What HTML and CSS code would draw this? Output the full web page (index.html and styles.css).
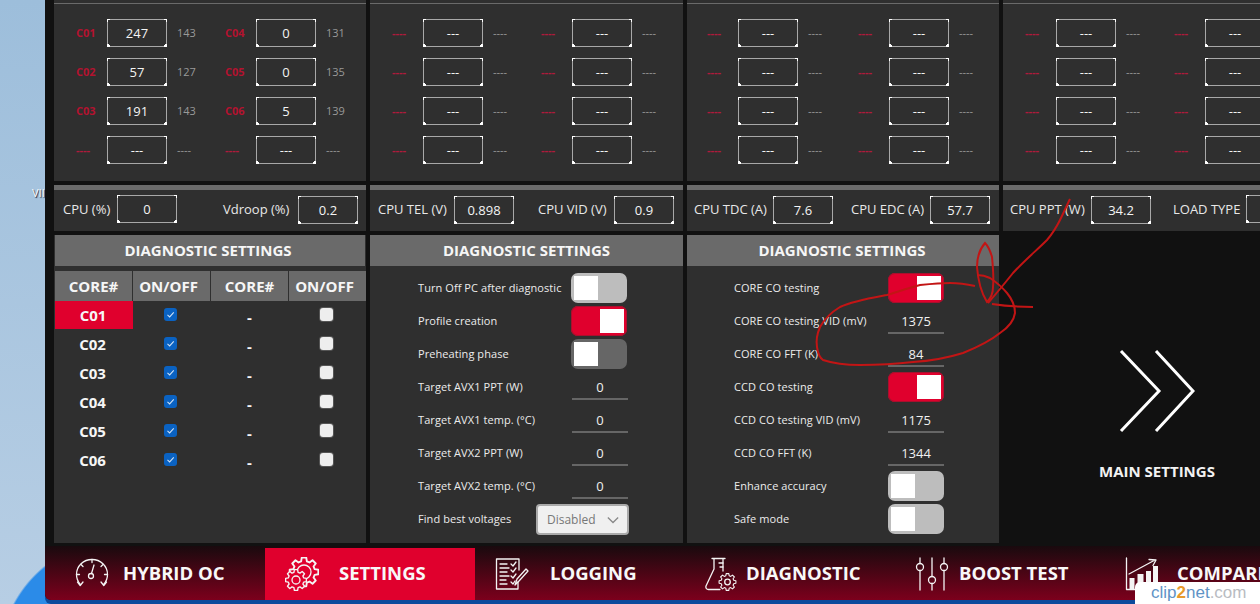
FILE: index.html
```html
<!DOCTYPE html>
<html lang="en">
<head>
<meta charset="utf-8">
<title>Hybrid OC settings</title>
<link rel="stylesheet" href="styles.css">
</head>
<body>
<div class="desktop-label">VII</div>
<div class="window">
  <main class="content">
    <section class="panel monitor">
      <div class="rule"></div>
      <div class="cores">
        <span class="cname">C01</span><span class="box">247</span><span class="cnum">143</span><span class="cname">C04</span><span class="box">0</span><span class="cnum">131</span>
        <span class="cname">C02</span><span class="box">57</span><span class="cnum">127</span><span class="cname">C05</span><span class="box">0</span><span class="cnum">135</span>
        <span class="cname">C03</span><span class="box">191</span><span class="cnum">143</span><span class="cname">C06</span><span class="box">5</span><span class="cnum">139</span>
        <span class="cname nil">----</span><span class="box">---</span><span class="cnum">----</span><span class="cname nil">----</span><span class="box">---</span><span class="cnum">----</span>
      </div>
    </section>
    <section class="panel monitor">
      <div class="rule"></div>
      <div class="cores">
        <span class="cname nil">----</span><span class="box">---</span><span class="cnum">----</span><span class="cname nil">----</span><span class="box">---</span><span class="cnum">----</span>
        <span class="cname nil">----</span><span class="box">---</span><span class="cnum">----</span><span class="cname nil">----</span><span class="box">---</span><span class="cnum">----</span>
        <span class="cname nil">----</span><span class="box">---</span><span class="cnum">----</span><span class="cname nil">----</span><span class="box">---</span><span class="cnum">----</span>
        <span class="cname nil">----</span><span class="box">---</span><span class="cnum">----</span><span class="cname nil">----</span><span class="box">---</span><span class="cnum">----</span>
      </div>
    </section>
    <section class="panel monitor">
      <div class="rule"></div>
      <div class="cores cores-c">
        <span class="cname nil">----</span><span class="box">---</span><span class="cnum">----</span><span class="cname nil">----</span><span class="box">---</span><span class="cnum">----</span>
        <span class="cname nil">----</span><span class="box">---</span><span class="cnum">----</span><span class="cname nil">----</span><span class="box">---</span><span class="cnum">----</span>
        <span class="cname nil">----</span><span class="box">---</span><span class="cnum">----</span><span class="cname nil">----</span><span class="box">---</span><span class="cnum">----</span>
        <span class="cname nil">----</span><span class="box">---</span><span class="cnum">----</span><span class="cname nil">----</span><span class="box">---</span><span class="cnum">----</span>
      </div>
    </section>
    <section class="panel monitor">
      <div class="rule"></div>
      <div class="cores">
        <span class="cname nil">----</span><span class="box">---</span><span class="cnum">----</span><span class="cname nil">----</span><span class="box">---</span><span></span>
        <span class="cname nil">----</span><span class="box">---</span><span class="cnum">----</span><span class="cname nil">----</span><span class="box">---</span><span></span>
        <span class="cname nil">----</span><span class="box">---</span><span class="cnum">----</span><span class="cname nil">----</span><span class="box">---</span><span></span>
        <span class="cname nil">----</span><span class="box">---</span><span class="cnum">----</span><span class="cname nil">----</span><span class="box">---</span><span></span>
      </div>
    </section>

    <section class="panel stats stats-a"><span class="slabel up">CPU (%)</span><span class="box up">0</span><i></i><span class="slabel">Vdroop (%)</span><span class="box">0.2</span></section>
    <section class="panel stats stats-b"><span class="slabel">CPU TEL (V)</span><span class="box">0.898</span><i></i><span class="slabel">CPU VID (V)</span><span class="box">0.9</span></section>
    <section class="panel stats stats-c"><span class="slabel">CPU TDC (A)</span><span class="box">7.6</span><i></i><span class="slabel">CPU EDC (A)</span><span class="box">57.7</span></section>
    <section class="panel stats stats-d"><span class="slabel">CPU PPT (W)</span><span class="box">34.2</span><i></i><span class="slabel">LOAD TYPE</span><span class="box up"></span></section>

    <section class="panel diag">
      <h2>DIAGNOSTIC SETTINGS</h2>
      <div class="core-table">
        <span class="th">CORE#</span><span class="th">ON/OFF</span><span class="th">CORE#</span><span class="th">ON/OFF</span>
        <span class="td active">C01</span><span class="td"><b class="check on"><svg viewBox="0 0 12 12"><path d="M3.2 6.4 5.2 8.2 9 4"/></svg></b></span><span class="td dash">-</span><span class="td"><b class="check"></b></span>
        <span class="td">C02</span><span class="td"><b class="check on"><svg viewBox="0 0 12 12"><path d="M3.2 6.4 5.2 8.2 9 4"/></svg></b></span><span class="td dash">-</span><span class="td"><b class="check"></b></span>
        <span class="td">C03</span><span class="td"><b class="check on"><svg viewBox="0 0 12 12"><path d="M3.2 6.4 5.2 8.2 9 4"/></svg></b></span><span class="td dash">-</span><span class="td"><b class="check"></b></span>
        <span class="td">C04</span><span class="td"><b class="check on"><svg viewBox="0 0 12 12"><path d="M3.2 6.4 5.2 8.2 9 4"/></svg></b></span><span class="td dash">-</span><span class="td"><b class="check"></b></span>
        <span class="td">C05</span><span class="td"><b class="check on"><svg viewBox="0 0 12 12"><path d="M3.2 6.4 5.2 8.2 9 4"/></svg></b></span><span class="td dash">-</span><span class="td"><b class="check"></b></span>
        <span class="td">C06</span><span class="td"><b class="check on"><svg viewBox="0 0 12 12"><path d="M3.2 6.4 5.2 8.2 9 4"/></svg></b></span><span class="td dash">-</span><span class="td"><b class="check"></b></span>
      </div>
    </section>

    <section class="panel form">
      <h2>DIAGNOSTIC SETTINGS</h2>
      <div class="rows">
        <div class="row"><span>Turn Off PC after diagnostic</span><b class="toggle off"></b></div>
        <div class="row"><span>Profile creation</span><b class="toggle on"></b></div>
        <div class="row"><span>Preheating phase</span><b class="toggle off dim"></b></div>
        <div class="row"><span>Target AVX1 PPT (W)</span><b class="value">0</b></div>
        <div class="row"><span>Target AVX1 temp. (°C)</span><b class="value">0</b></div>
        <div class="row"><span>Target AVX2 PPT (W)</span><b class="value">0</b></div>
        <div class="row"><span>Target AVX2 temp. (°C)</span><b class="value">0</b></div>
        <div class="row"><span>Find best voltages</span><b class="select">Disabled<svg viewBox="0 0 14 8"><path d="M1 1 7 7 13 1"/></svg></b></div>
      </div>
    </section>

    <section class="panel form form-c">
      <h2>DIAGNOSTIC SETTINGS</h2>
      <div class="rows">
        <div class="row"><span>CORE CO testing</span><b class="toggle on"></b></div>
        <div class="row"><span>CORE CO testing VID (mV)</span><b class="value">1375</b></div>
        <div class="row"><span>CORE CO FFT (K)</span><b class="value">84</b></div>
        <div class="row"><span>CCD CO testing</span><b class="toggle on"></b></div>
        <div class="row"><span>CCD CO testing VID (mV)</span><b class="value">1175</b></div>
        <div class="row"><span>CCD CO FFT (K)</span><b class="value">1344</b></div>
        <div class="row"><span>Enhance accuracy</span><b class="toggle off"></b></div>
        <div class="row"><span>Safe mode</span><b class="toggle off"></b></div>
      </div>
    </section>

    <section class="main-link">
      <svg class="chevrons" viewBox="0 0 76 84"><path d="M2 2 40 42 2 82M37 2 74 42 37 82"/></svg>
      <strong>MAIN SETTINGS</strong>
    </section>
  </main>

  <svg class="defs" width="0" height="0"><defs><path id="gear" d="M9.88 -1.56 L9.88 1.56 L7.34 1.97 L6.58 3.8 L8.09 5.88 L5.88 8.09 L3.8 6.58 L1.97 7.34 L1.56 9.88 L-1.56 9.88 L-1.97 7.34 L-3.8 6.58 L-5.88 8.09 L-8.09 5.88 L-6.58 3.8 L-7.34 1.97 L-9.88 1.56 L-9.88 -1.56 L-7.34 -1.97 L-6.58 -3.8 L-8.09 -5.88 L-5.88 -8.09 L-3.8 -6.58 L-1.97 -7.34 L-1.56 -9.88 L1.56 -9.88 L1.97 -7.34 L3.8 -6.58 L5.88 -8.09 L8.09 -5.88 L6.58 -3.8 L7.34 -1.97 Z"/></defs></svg>

  <nav class="tabs">
    <a class="tab tab-hybrid">
      <svg class="ico" viewBox="0 0 34 34"><path d="M5 27C2.500 24 1.500 21 1.500 17.500 1.500 9 8.500 2.500 17 2.500S32.500 9 32.500 17.500C32.500 21 31.500 24 29 27"/><path d="M2.500 25 5.200 28.500 8 25M26 25 28.800 28.500 31.500 25M17 2.500V5.500M6 7.500 8 9.500M28 7.500 26 9.500M1.500 17.500H4.500M29.500 17.500H32.500M16.500 16.500 19 8"/><circle cx="16" cy="19" r="2.500"/></svg>
      <span>HYBRID OC</span>
    </a>
    <a class="tab tab-settings current">
      <svg class="ico" viewBox="0 0 34 34"><use href="#gear" transform="translate(19 15) scale(1.45)"/><circle cx="19" cy="15" r="7"/><use class="masked" href="#gear" transform="translate(11 23) scale(1.05)"/><circle cx="11" cy="23" r="4"/></svg>
      <span>SETTINGS</span>
    </a>
    <a class="tab tab-logging">
      <svg class="ico" viewBox="0 0 34 34"><path d="M23 25V32H1.500V2H24V13"/><path d="M5 7H12M5 11H14M5 15H12M5 19H14M5 23H11M5 27H12"/><path d="M16 7 18 9 21 5M16 13 18 15 21 11M16 19 18 21 21 17M16 25 18 27 20 24"/><path d="M20 28 22 22 31 12 33 14 24 24Z"/></svg>
      <span>LOGGING</span>
    </a>
    <a class="tab tab-flask">
      <svg class="ico" viewBox="0 0 32 34"><path d="M7 1.500H20M9 1.500V12L1 29C.5 31 1.500 32.500 3.500 32.500H15M18 1.500V14"/><path d="M14 6H18M15 10H18"/><use href="#gear" transform="translate(22.500 25) scale(.85)"/><circle cx="22.500" cy="25" r="2.800"/></svg>
      <span>DIAGNOSTIC</span>
    </a>
    <a class="tab tab-boost">
      <svg class="ico" viewBox="0 0 34 34"><circle cx="5" cy="10" r="3.500"/><circle cx="17" cy="23" r="3.500"/><circle cx="29" cy="10" r="3.500"/><path d="M5 1V6.500M5 13.500V33M17 1V19.500M17 26.500V33M29 1V6.500M29 13.500V33"/></svg>
      <span>BOOST TEST</span>
    </a>
    <a class="tab tab-compare">
      <svg class="ico" viewBox="0 0 34 34"><path d="M1.500 1V32.500H33"/><path d="M4 17 30 3M24 2.500 31 3 28 8.500"/><path class="solid" d="M4.500 21H9.500V32H4.500ZM12.500 17H18.500V32H12.500ZM21 14H26V32H21ZM28 9H33V32H28Z"/></svg>
      <span>COMPARE</span>
    </a>
  </nav>
</div>

<svg class="scribble" viewBox="0 0 1260 604" aria-hidden="true">
  <path d="M975 286C966 284 958 283 950 283 940 283 930 284 920 285 908 288 897 292 887 295 871 298 853 301 840 307 830 313 824 320 820 327 817 334 816 341 817 347 818 354 820 358 823 360 835 364 848 365 860 365 878 365 896 364 913 362 930 361 947 358 963 353 978 347 990 341 1000 333 1009 327 1014 320 1015 313 1015 306 1012 299 1007 293 1002 287 996 282 990 278 986 276 981 275 977 275"/>
  <path d="M992 304C1005 306 1019 307 1033 307"/>
  <path d="M985 243C979 250 977 258 977 267 978 280 982 294 987 302 991 298 993 293 993 287 994 277 993 267 992 257 990 250 988 246 985 243Z"/>
  <path d="M988 303C996 294 1005 283 1013 273 1025 260 1037 250 1047 240 1053 233 1057 226 1060 220 1064 212 1067 205 1070 199"/>
</svg>

<div class="watermark"><span class="wm-blue">clip</span><span class="wm-two">2</span><span class="wm-blue">net</span><span class="wm-grey">.com</span></div>
</body>
</html>
```

FILE: styles.css
```css
* { box-sizing: border-box; }

html, body {
  margin: 0;
  width: 1260px;
  height: 604px;
  overflow: hidden;
}

body {
  position: relative;
  font-family: "Open Sans", "Noto Sans", sans-serif;
  background:
    radial-gradient(circle at 120px 660px, #2b8be8 0 119px, rgba(43,139,232,0) 121px),
    linear-gradient(#9dbedb, #b7cee4);
}

.desktop-label {
  position: absolute;
  left: 32px;
  top: 185px;
  color: #fff;
  font-size: 11px;
  text-shadow: 1px 1px 1px #223;
}

.window {
  position: relative;
  margin-left: 45px;
  width: 1215px;
  height: 600px;
  padding-left: 9px;
  background: #111;
  border-bottom-left-radius: 6px;
  overflow: hidden;
  box-shadow: 0 4px 0 #0d4a9c;
}

.content {
  display: grid;
  grid-template-columns: 312px 313px 312px 308px;
  grid-template-rows: 181px 46px 308px;
  column-gap: 4px;
  row-gap: 4px;
  height: 543px;
}

.panel { background: #2f2f2f; min-width: 0; }

.rule { height: 1px; margin-top: 3px; background: #6a6a6a; }

.monitor { overflow: hidden; }

.cores {
  display: grid;
  grid-template-columns: 30px 60px 59px 30px 60px 59px;
  grid-auto-rows: 28px;
  row-gap: 11px;
  align-items: center;
  padding: 15px 0 0 23px;
}

.cores-c { padding-left: 21px; grid-template-columns: 30px 60px 61px 30px 60px 59px; }

.cname { margin-left: -1px; font-size: 11px; line-height: 14px; font-weight: 700; color: #b4122f; }
.cname.nil { color: #b01a3c; }
.cnum { font-size: 11px; line-height: 14px; color: #999; padding-left: 10px; }

.box {
  display: flex;
  align-items: center;
  justify-content: center;
  width: 60px;
  height: 28px;
  color: #f4f4f4;
  font-size: 13px;
  line-height: 18px;
  background:
    linear-gradient(#fff, #fff) 0 0 / 3px 1px no-repeat,
    linear-gradient(#fff, #fff) 0 0 / 1px 3px no-repeat,
    linear-gradient(#fff, #fff) 100% 0 / 3px 1px no-repeat,
    linear-gradient(#fff, #fff) 100% 0 / 1px 3px no-repeat,
    linear-gradient(#fff, #fff) 0 100% / 3px 2px no-repeat,
    linear-gradient(#fff, #fff) 0 100% / 2px 3px no-repeat,
    linear-gradient(#fff, #fff) 100% 100% / 3px 2px no-repeat,
    linear-gradient(#fff, #fff) 100% 100% / 2px 3px no-repeat,
    linear-gradient(#a8a8a8, #a8a8a8) 0 0 / 100% 1px no-repeat,
    linear-gradient(#a8a8a8, #a8a8a8) 0 100% / 100% 1px no-repeat,
    linear-gradient(#a8a8a8, #a8a8a8) 0 0 / 1px 100% no-repeat,
    linear-gradient(#a8a8a8, #a8a8a8) 100% 0 / 1px 100% no-repeat;
}

.stats {
  display: grid;
  align-items: center;
  border-top: 5px solid #6a6a6a;
  padding-bottom: 1px;
}

.stats .up { margin-top: -2px; }

.stats-a { grid-template-columns: 54px 60px 46px 75px 60px; padding-left: 9px; }
.stats-b { grid-template-columns: 76px 60px 24px 76px 60px; padding-left: 8px; }
.stats-c { grid-template-columns: 79px 60px 18px 79px 60px; padding-left: 7px; }
.stats-d { grid-template-columns: 81px 60px 22px 73px 60px; padding-left: 7px; }

.slabel { font-size: 13px; line-height: 18px; margin-top: -3px; color: #e8e8e8; white-space: nowrap; }

h2 {
  margin: 0;
  height: 31px;
  padding-bottom: 2px;
  display: flex;
  align-items: center;
  justify-content: center;
  background: #6a6a6a;
  color: #f6f6f6;
  font-size: 15px;
  font-weight: 700;
}

.diag { padding: 0 1px; }
.diag h2 { padding-right: 4px; }
.form-c h2 { padding-right: 2px; }

.core-table {
  display: grid;
  grid-template-columns: 77px 77px 77px 77px;
  grid-auto-rows: 29px;
  column-gap: 1px;
  padding-top: 5px;
}

.th {
  display: flex;
  align-items: center;
  justify-content: center;
  height: 30px;
  background: #6a6a6a;
  color: #f6f6f6;
  font-size: 15px;
  font-weight: 700;
}

.th:nth-child(even) { padding-right: 6px; }

.td {
  display: flex;
  align-items: center;
  justify-content: center;
  margin-top: 1px;
  color: #f6f6f6;
  font-size: 15px;
  font-weight: 700;
}

.td:nth-child(4n+1) { padding-right: 2px; }
.td.active { background: #e0002d; margin-right: -1px; }
.td.dash { padding-top: 4px; }

.check {
  display: block;
  width: 13px;
  height: 13px;
  margin: -2px 2px 0 0;
  border-radius: 3px;
  background: #eee;
  box-shadow: 0 0 0 1px #555;
}

.check.on { background: #0a62c2; box-shadow: none; }
.check svg { display: block; width: 13px; height: 13px; fill: none; stroke: #cfe2f7; stroke-width: 1; }

.rows { display: grid; grid-auto-rows: 33px; padding: 5px 0 0 48px; }
.form-c .rows { padding-left: 47px; }

.row {
  position: relative;
  display: flex;
  align-items: center;
  font-size: 11px;
  line-height: 14px;
  letter-spacing: .07px;
  color: #ececec;
}

.row > span { white-space: nowrap; }
.row > b { position: absolute; left: 153px; font-weight: 400; letter-spacing: 0; }
.form-c .row > b { left: 154px; }

.toggle {
  display: flex;
  top: 2px;
  width: 56px;
  height: 30px;
  padding: 3px;
  border-radius: 7px;
}

.toggle::after { content: ""; width: 24px; height: 24px; background: #fff; }
.toggle.off { background: #bdbdbd; }
.toggle.off.dim { background: #666; }
.toggle.on { background: #e0002d; justify-content: flex-end; box-shadow: inset 0 0 0 1px #a8102d; }

.value {
  display: flex;
  align-items: center;
  justify-content: center;
  top: 0;
  width: 56px;
  height: 30px;
  margin-left: 1px;
  padding-top: 5px;
  border-bottom: 2px solid #666;
  font-size: 13px;
  line-height: 18px;
  color: #f0f0f0;
}

.form-c .value { margin-left: 0; }

.select {
  display: flex;
  align-items: center;
  justify-content: space-between;
  top: 2px;
  width: 93px;
  height: 31px;
  padding: 0 8px 0 9px;
  margin-left: -35px;
  border: 2px solid #aaa;
  border-radius: 4px;
  background: #f0f0f0;
  color: #777;
  font-size: 12px;
}

.select svg { width: 12px; height: 8px; fill: none; stroke: #888; stroke-width: 1.500; }

.main-link {
  display: flex;
  flex-direction: column;
  align-items: center;
  padding-top: 114px;
  color: #f2f2f2;
}

.chevrons { width: 76px; height: 84px; fill: none; stroke: #fff; stroke-width: 3; }
.main-link strong { margin-top: 28px; font-size: 15px; font-weight: 700; }

.defs { position: absolute; }

.tabs {
  display: flex;
  height: 54px;
  margin: 3px 0 0 -9px;
  padding-left: 10px;
  background: linear-gradient(#190a0e, #7c001c);
}

.tab {
  display: flex;
  flex: 0 0 210px;
  align-items: center;
  height: 52px;
  margin-top: 2px;
  padding: 0 0 1px 20px;
  color: #f8f8f8;
  font-size: 18.500px;
  font-weight: 700;
  white-space: nowrap;
}

.tab span { padding-bottom: 2px; }
.tab.current { background: #e0002d; }

.ico {
  flex: none;
  width: 34px;
  height: 34px;
  fill: none;
  stroke: #f4f4f4;
  stroke-width: 1.300;
  stroke-linecap: round;
  stroke-linejoin: round;
}

.ico use { vector-effect: non-scaling-stroke; stroke-width: 1.300; fill: none; }
.ico .masked { fill: #e0002d; }
.ico .solid { fill: #f4f4f4; stroke: none; }

.tab-hybrid .ico { margin-right: 14px; }
.tab-settings .ico { margin-right: 20px; }
.tab-logging .ico { margin-right: 21px; }
.tab-flask .ico { width: 32px; margin-right: 9px; }
.tab-boost .ico { margin-right: 10px; }
.tab-compare .ico { margin-right: 18px; }

.scribble {
  position: absolute;
  left: 0;
  top: 0;
  width: 1260px;
  height: 604px;
  fill: none;
  stroke: #c21515;
  stroke-width: 2;
  pointer-events: none;
}

.watermark {
  position: absolute;
  right: 0;
  bottom: 0;
  width: 125px;
  height: 22px;
  padding-left: 16px;
  background: #fff;
  border-top-left-radius: 5px;
  font-family: "Liberation Sans", sans-serif;
  font-size: 17px;
  line-height: 22px;
  white-space: nowrap;
}

.wm-blue { color: #5f93c6; }
.wm-two { color: #e89a2c; font-weight: 700; }
.wm-grey { color: #b9bcc2; }
```
